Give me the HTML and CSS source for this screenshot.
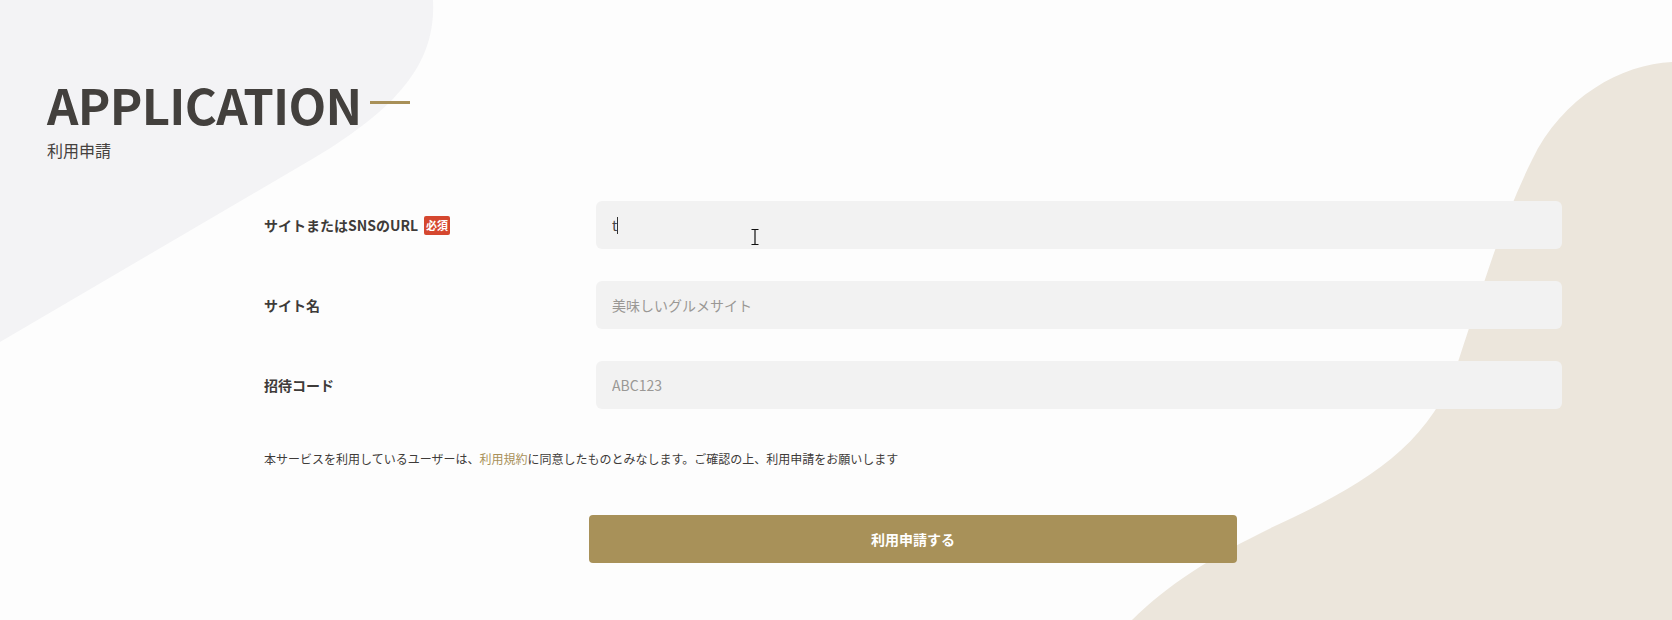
FILE: index.html
```html
<!DOCTYPE html>
<html lang="ja">
<head>
<meta charset="utf-8">
<title>APPLICATION 利用申請</title>
<link rel="stylesheet" href="styles.css">
</head>
<body>
<svg class="bg" width="1672" height="620" viewBox="0 0 1672 620" aria-hidden="true">
  <path class="blob-left" d="M0,0 L433,0 C436,60 402,105 314,158 L0,342 Z"/>
  <path class="blob-right" d="M1672,62 C1622,64 1562,97 1532,160 C1502,220 1482,290 1457,365 C1432,440 1372,480 1292,518 C1222,550 1170,582 1132,620 L1672,620 Z"/>
</svg>
<main class="page">
  <header class="heading">
    <h1 class="title">APPLICATION<span class="title-bar"></span></h1>
    <p class="subtitle">利用申請</p>
  </header>
  <form class="form">
    <div class="rows">
      <div class="row">
        <label class="label" for="url">サイトまたはSNSのURL<span class="badge">必須</span></label>
        <div class="field-wrap">
          <input class="field field-filled" id="url" type="text" value="t">
          <span class="caret"></span>
          <svg class="mouse" width="8" height="16" viewBox="0 0 8 16" aria-hidden="true">
            <path d="M0.5 0.5 H7.5 M4 0.5 V15.5 M0.5 15.5 H7.5" stroke="#111" stroke-width="1.2" fill="none"/>
          </svg>
        </div>
      </div>
      <div class="row">
        <label class="label" for="name">サイト名</label>
        <div class="field-wrap">
          <input class="field" id="name" type="text" placeholder="美味しいグルメサイト">
        </div>
      </div>
      <div class="row">
        <label class="label" for="code">招待コード</label>
        <div class="field-wrap">
          <input class="field" id="code" type="text" placeholder="ABC123">
        </div>
      </div>
    </div>
    <p class="note">本サービスを利用しているユーザーは、<a class="note-link" href="#">利用規約</a>に同意したものとみなします。ご確認の上、利用申請をお願いします</p>
    <div class="actions">
      <button class="submit" type="button">利用申請する</button>
    </div>
  </form>
</main>
</body>
</html>
```
FILE: styles.css
```css
* {
  box-sizing: border-box;
}

html, body {
  margin: 0;
  padding: 0;
}

body {
  width: 1672px;
  height: 620px;
  overflow: hidden;
  position: relative;
  background: #fdfdfd;
  font-family: "Noto Sans CJK JP", "Noto Sans", sans-serif;
  color: #3e3b39;
}

.bg {
  position: absolute;
  left: 0;
  top: 0;
  z-index: 0;
}

.blob-left {
  fill: #f3f3f5;
}

.blob-right {
  fill: #ece6dc;
}

.page {
  position: relative;
  z-index: 1;
  padding: 79px 110px 0 47px;
}

.title {
  margin: 0;
  display: flex;
  align-items: center;
  font-size: 49px;
  line-height: 49px;
  letter-spacing: -0.7px;
  font-weight: 700;
  color: #43403d;
}

.title-bar {
  display: block;
  width: 40px;
  height: 3px;
  margin-left: 8px;
  margin-top: -3px;
  background: #a89058;
}

.subtitle {
  margin: 14px 0 0;
  font-size: 16px;
  line-height: 16px;
  color: #45413e;
}

.form {
  margin: 43px 0 0 217px;
}

.rows {
  display: flex;
  flex-direction: column;
  gap: 32px;
}

.row {
  display: grid;
  grid-template-columns: 332px 1fr;
  align-items: center;
  height: 48px;
}

.label {
  display: flex;
  align-items: center;
  font-size: 14px;
  font-weight: 700;
  color: #3e3b39;
}

.badge {
  display: inline-block;
  margin-left: 6px;
  height: 19px;
  padding: 0 2px;
  border-radius: 2px;
  background: #d5472f;
  color: #fff;
  font-size: 11px;
  line-height: 19px;
  font-weight: 700;
}

.field-wrap {
  position: relative;
}

.field {
  display: block;
  width: 100%;
  height: 48px;
  padding: 0 16px;
  border: none;
  border-radius: 6px;
  background: #f2f2f2;
  font-family: "Noto Sans CJK JP", "Noto Sans", sans-serif;
  font-size: 14px;
  color: #444;
  outline: none;
}

.field::placeholder {
  color: #9a9895;
}

.caret {
  position: absolute;
  left: 21px;
  top: 16px;
  width: 1px;
  height: 17px;
  background: #333;
}

.mouse {
  position: absolute;
  left: 155px;
  top: 28px;
}

.note {
  margin: 41px 0 0;
  font-size: 12px;
  line-height: 18px;
  color: #3e3b39;
}

.note-link {
  color: #a89058;
  text-decoration: none;
}

.actions {
  display: flex;
  justify-content: center;
  margin-top: 47px;
}

.submit {
  width: 648px;
  height: 48px;
  border: none;
  border-radius: 4px;
  background: #a89159;
  color: #fff;
  font-family: "Noto Sans CJK JP", "Noto Sans", sans-serif;
  font-size: 14px;
  font-weight: 700;
  cursor: pointer;
}
```
